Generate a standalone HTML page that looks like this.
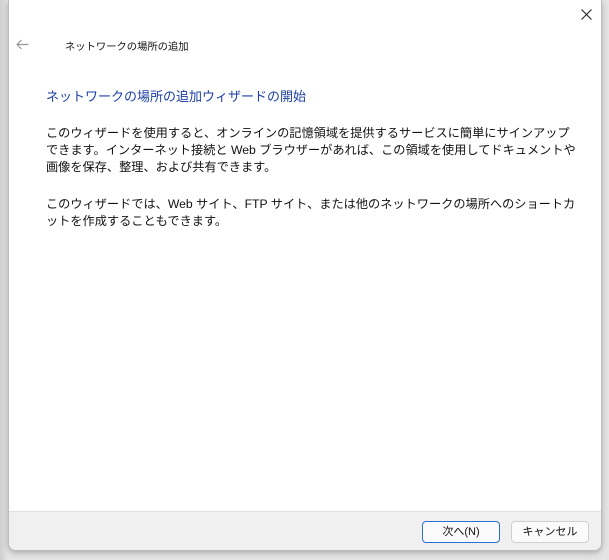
<!DOCTYPE html>
<html><head><meta charset="utf-8"><style>
body{margin:0;width:609px;height:560px;background:linear-gradient(90deg,#cfcfcf,#e4e4e4 8px,#e4e4e4);position:relative;overflow:hidden;font-family:"Liberation Sans","Noto Sans CJK JP",sans-serif;}
.win{position:absolute;left:8px;top:0;width:594px;height:551px;background:#fff;border:1px solid #bdbdbd;border-top:none;border-radius:0 0 8px 8px;box-sizing:border-box;overflow:hidden;box-shadow:0 2px 6px rgba(0,0,0,.25);}
.x{position:absolute;left:572px;top:9px;}
.back{position:absolute;left:7px;top:39px;}
.title{position:absolute;left:56px;top:38px;font-size:10.3px;color:#111;}
h1{position:absolute;left:37px;top:86px;margin:0;font-weight:normal;font-size:13px;color:#1c3fa6;}
p{position:absolute;left:37px;margin:0;font-size:12.2px;line-height:17px;color:#111;white-space:nowrap;}
.foot{position:absolute;left:0;right:0;top:511px;bottom:0;background:#f0f0f0;border-top:1px solid #dfdfdf;}
.btn{position:absolute;top:9px;height:22px;width:78px;box-sizing:border-box;border:1px solid #cfcfcf;border-radius:4px;background:#fbfbfb;font-size:11px;text-align:center;line-height:20px;color:#111;}
</style></head><body>
<div class="win">
<svg class="x" width="11" height="11" viewBox="0 0 11 11"><path d="M0.5 0.5L10.5 10.5M10.5 0.5L0.5 10.5" stroke="#222" stroke-width="1.1"/></svg>
<svg class="back" width="13" height="11" viewBox="0 0 13 11"><path d="M12.5 5.5H1M5.5 1L1 5.5L5.5 10" stroke="#999" stroke-width="1.2" fill="none"/></svg>
<div class="title">ネットワークの場所の追加</div>
<h1>ネットワークの場所の追加ウィザードの開始</h1>
<p style="top:125px">このウィザードを使用すると、オンラインの記憶領域を提供するサービスに簡単にサインアップ<br>できます。インターネット接続と Web ブラウザーがあれば、この領域を使用してドキュメントや<br>画像を保存、整理、および共有できます。</p>
<p style="top:196px">このウィザードでは、Web サイト、FTP サイト、または他のネットワークの場所へのショートカ<br>ットを作成することもできます。</p>
<div class="foot">
<div class="btn" style="left:413px;border-color:#2a6fc9">次へ(N)</div>
<div class="btn" style="left:502px">キャンセル</div>
</div>
</div>
</body></html>
